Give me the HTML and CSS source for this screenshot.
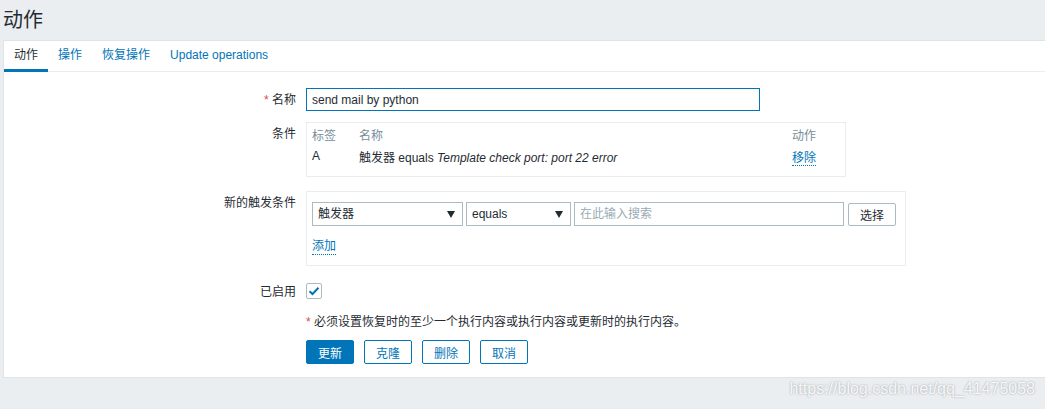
FILE: index.html
```html
<!DOCTYPE html>
<html lang="zh-CN">
<head>
    <meta charset="UTF-8">
    <title>动作</title>
    <link rel="stylesheet" href="styles.css">
</head>
<body>

    <!-- 页头 -->
    <div class="header">
        <h1>动作</h1>
    </div>

    <div class="panel">
        <!-- 标签页 -->
        <div class="tabs">
            <span class="tab active">动作</span>
            <a class="tab">操作</a>
            <a class="tab">恢复操作</a>
            <a class="tab">Update operations</a>
        </div>

        <div class="form">
            <div class="row row-name">
                <label class="label"><span class="asterisk">*</span> 名称</label>
                <div class="field">
                    <input class="text-input focused" type="text" value="send mail by python">
                </div>
            </div>

            <div class="row row-cond">
                <label class="label">条件</label>
                <div class="field">
                    <div class="cond-box">
                        <table class="cond-table">
                            <tr class="head">
                                <td class="c-tag">标签</td>
                                <td class="c-name">名称</td>
                                <td>动作</td>
                            </tr>
                            <tr>
                                <td>A</td>
                                <td>触发器 equals <i>Template check port: port 22 error</i></td>
                                <td><a class="link">移除</a></td>
                            </tr>
                        </table>
                    </div>
                </div>
            </div>

            <div class="row row-new">
                <label class="label">新的触发条件</label>
                <div class="field">
                    <div class="new-box">
                        <div class="new-line">
                            <div class="select sel-type">触发器</div>
                            <div class="select sel-op">equals</div>
                            <input class="text-input search" type="text" placeholder="在此输入搜索">
                            <button class="btn-grey">选择</button>
                        </div>
                        <a class="link add-link">添加</a>
                    </div>
                </div>
            </div>

            <div class="row row-enabled">
                <label class="label">已启用</label>
                <div class="field">
                    <span class="checkbox">
                        <svg width="12" height="10" viewBox="0 0 12 10"><path d="M1.5 5.2 L4.5 8 L10.5 1.8" fill="none" stroke="#0275b8" stroke-width="2"/></svg>
                    </span>
                </div>
            </div>

            <div class="row row-note">
                <span class="label"></span>
                <div class="field note"><span class="asterisk">*</span> 必须设置恢复时的至少一个执行内容或执行内容或更新时的执行内容。</div>
            </div>

            <div class="row row-buttons">
                <span class="label"></span>
                <div class="field buttons">
                    <button class="btn primary">更新</button>
                    <button class="btn">克隆</button>
                    <button class="btn">删除</button>
                    <button class="btn">取消</button>
                </div>
            </div>
        </div>
    </div>

    <div class="watermark">https://blog.csdn.net/qq_41475058</div>

</body>
</html>
```

FILE: styles.css
```css
* {
    margin: 0;
    padding: 0;
    box-sizing: border-box;
}

body {
    font-family: "Liberation Sans", "Noto Sans CJK SC", sans-serif;
    font-size: 12px;
    color: #1f2c33;
    background-color: #ebeef0;
    height: 409px;
    overflow: hidden;
}

.header {
    height: 40px;
    padding-left: 3px;
}

.header h1 {
    font-size: 20px;
    font-weight: normal;
    line-height: 40px;
}

.panel {
    margin-left: 3px;
    height: 338px;
    background-color: #fff;
    border: 1px solid #dfe4e7;
    border-right: none;
}

/* 标签页 */
.tabs {
    display: flex;
    height: 31px;
    border-bottom: 1px solid #ebeef0;
}

.tab {
    height: 31px;
    line-height: 28px;
    padding: 0 10px;
    border-bottom: 3px solid transparent;
    color: #0275b8;
    cursor: pointer;
}

.tab.active {
    color: #1f2c33;
    border-bottom-color: #0275b8;
}

/* 表单 */
.form {
    padding-top: 16px;
}

.row {
    display: grid;
    grid-template-columns: 292px 1fr;
    column-gap: 10px;
}

.label {
    text-align: right;
    line-height: 24px;
}

.asterisk {
    color: #e0464f;
}

.row-cond {
    margin-top: 10px;
}

.row-new {
    margin-top: 14px;
}

.row-enabled {
    margin-top: 17px;
}

.row-enabled .label {
    line-height: 18px;
}

.row-note {
    margin-top: 14px;
}

.row-buttons {
    margin-top: 11px;
}

.text-input {
    height: 23px;
    padding: 0 5px;
    border: 1px solid #acbbc2;
    font-family: inherit;
    font-size: 12px;
    color: #1f2c33;
    outline: none;
}

.text-input.focused {
    width: 454px;
    border-color: #0275b8;
}

.link {
    color: #0275b8;
    border-bottom: 1px dotted #0275b8;
    cursor: pointer;
}

/* 条件 */
.cond-box {
    width: 540px;
    height: 55px;
    border: 1px solid #ebeef0;
    padding: 0 5px;
}

.cond-table {
    width: 100%;
    border-collapse: collapse;
}

.cond-table td {
    height: 22px;
    padding: 0;
    vertical-align: middle;
}

.cond-table .head td {
    color: #768d99;
}

.c-tag {
    width: 47px;
}

.c-name {
    width: 433px;
}

/* 新的触发条件 */
.new-box {
    width: 600px;
    height: 75px;
    border: 1px solid #ebeef0;
    padding: 10px 5px 0;
}

.new-line {
    display: flex;
    align-items: center;
}

.select {
    position: relative;
    height: 24px;
    line-height: 22px;
    padding-left: 5px;
    border: 1px solid #acbbc2;
}

.select::after {
    content: "";
    position: absolute;
    right: 7px;
    top: 8px;
    border-left: 4px solid transparent;
    border-right: 4px solid transparent;
    border-top: 7px solid #1f2c33;
}

.sel-type {
    width: 151px;
}

.sel-op {
    width: 105px;
    margin-left: 3px;
}

.search {
    width: 270px;
    height: 24px;
    margin-left: 3px;
}

.search::placeholder {
    color: #9aabb4;
}

.btn-grey {
    width: 48px;
    height: 23px;
    margin-left: 4px;
    background-color: #fff;
    border: 1px solid #acbbc2;
    border-radius: 2px;
    font-family: inherit;
    font-size: 12px;
    color: #1f2c33;
}

.add-link {
    display: inline-block;
    margin-top: 12px;
    line-height: 16px;
}

/* 已启用 */
.checkbox {
    display: flex;
    justify-content: center;
    align-items: center;
    width: 16px;
    height: 16px;
    border: 1px solid #acbbc2;
    border-radius: 2px;
}

.note {
    line-height: 14px;
}

/* 按钮 */
.buttons {
    display: flex;
    gap: 10px;
}

.btn {
    height: 24px;
    padding: 0 11px;
    background-color: #fff;
    border: 1px solid #0275b8;
    border-radius: 2px;
    color: #0275b8;
    font-family: inherit;
    font-size: 12px;
    cursor: pointer;
}

.btn.primary {
    background-color: #0275b8;
    color: #fff;
}

.watermark {
    position: absolute;
    top: 380px;
    right: 10px;
    font-size: 16px;
    color: rgba(255, 255, 255, 0.9);
    text-shadow: 0 0 2px rgba(110, 120, 130, 0.7);
}
```
